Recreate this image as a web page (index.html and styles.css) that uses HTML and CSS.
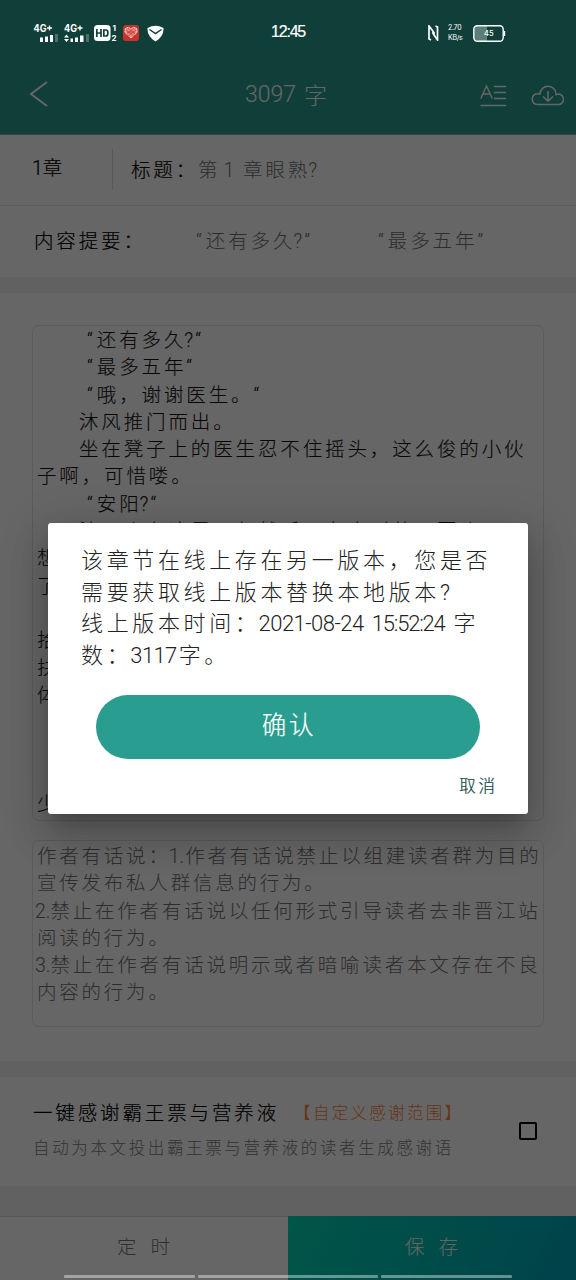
FILE: index.html
```html
<!DOCTYPE html>
<html lang="zh-CN">
<head>
<meta charset="utf-8">
<title>章节编辑</title>
<link rel="stylesheet" href="styles.css">
</head>
<body>
<div class="app">
  <header class="header">
    <div class="status">
      <div class="status-left">
        <svg class="sig1" width="26" height="20" viewBox="0 0 26 20"><text class="g4" x="0.500" y="9" textLength="13" lengthAdjust="spacingAndGlyphs">4G</text><path d="M14 5h5M16.500 2.500v5" stroke="#fff" stroke-width="1.300"/><path d="M7 14.500h3V19H7zM12 13.500h3V19h-3zM17 12h3v7h-3z" fill="#fff"/><path d="M22 11h3v8h-3z" fill="#fff" opacity=".25"/></svg>
        <svg class="sig2" width="26" height="20" viewBox="0 0 26 20"><text class="g4" x="0" y="9" textLength="13" lengthAdjust="spacingAndGlyphs">4G</text><path d="M13.500 5h5M16 2.500v5" stroke="#fff" stroke-width="1.300"/><path d="M0 14.500 2.500 11.500 5 14.500zM0 16 2.500 19 5 16zM6.500 15.500h2.500V19H6.500zM11 14.500h3V19h-3zM16 12.500h3.500V19H16z" fill="#fff"/><path d="M22 11h3v8h-3z" fill="#fff" opacity=".25"/></svg>
        <svg class="hd" width="24" height="18" viewBox="0 0 24 18"><rect y="1" width="16.500" height="16" rx="3.500" fill="#fff"/><path d="M2.800 5v8M7 5v8M3 9h4M9.800 6h2q2 0 2 2v2q0 2-2 2h-2z" fill="none" stroke="#103f39" stroke-width="1.700"/><text class="tiny" x="18.500" y="7">1</text><text class="tiny" x="17.500" y="17">2</text></svg>
        <svg class="red" width="16" height="16" viewBox="0 0 16 16"><rect width="16" height="16" rx="3" fill="#c7322d"/><path d="M8 13 2 7.500V4l2-1.500h2L8 4l2-1.500h2L14 4v3.500z" fill="#e88a84" stroke="#fff" stroke-width=".8" stroke-dasharray="2 .7"/><path d="m3 5 8 6M5 3l7 6M13 5l-8 6M11 3 4 9M4 7h8" stroke="#c7322d" stroke-width=".7"/></svg>
        <svg class="shield" width="17" height="17" viewBox="0 0 17 17"><path d="M.5 3Q8.500-1.500 16.500 3q.5 8-8 13.500Q0 11 .5 3z" fill="#fff"/><path d="m2.500 4.500 6 4 6-4" fill="none" stroke="#103f39" stroke-width="1.500"/></svg>
      </div>
      <div class="clock">12:45</div>
      <div class="status-right">
        <svg width="11" height="16" viewBox="0 0 11 16"><path d="M3 15 1 14V1l5 6.500V10M5 6v2.500L9.500 15V2L7.500 1" fill="none" stroke="#fff" stroke-width="1.700"/></svg>
        <div class="speed"><span>2.70</span><span>KB/s</span></div>
        <svg width="33" height="17" viewBox="0 0 33 17"><path d="M4 1h10v15H4q-3 0-3-3V4q0-3 3-3z" fill="#5a7f78"/><rect x=".8" y=".8" width="29.400" height="15.400" rx="3.500" fill="none" stroke="#fff" stroke-width="1.400"/><path d="M31.500 6v5" stroke="#fff" stroke-width="1.400"/><text class="batt" x="11" y="10.500">45</text></svg>
      </div>
    </div>
    <div class="toolbar">
      <svg class="back" width="20" height="28" viewBox="0 0 20 28"><path d="M18 2 2 14l16 12" fill="none" stroke="#fff" stroke-width="2"/></svg>
      <div class="title"><span class="words">3097</span><span>字</span></div>
      <svg class="font-icon" width="27" height="23" viewBox="0 0 27 23"><path d="M.8 14.500 6.500 2l5.700 12.500M3 10h7M14 2.500h12M14 8.500h12M14 14.500h12M.5 21.500H26" fill="none" stroke="#fff" stroke-width="1.400"/></svg>
      <svg class="cloud" width="34" height="21" viewBox="0 0 34 21"><path d="M7 19.500h20a5 5 0 0 0 .5-10.500q-1.500 0-2.500.5A8 8 0 0 0 9 9Q1.300 8 1.200 14 1.500 19.500 7 19.500zM17 6v10M12 11.500l5 4.700 5-4.700" fill="none" stroke="#fff" stroke-width="1.500"/></svg>
    </div>
  </header>

  <div class="row row-title">
    <div class="chapter"><span class="num">1</span>章</div>
    <div class="label">标题：</div>
    <div class="value">第<span class="one">1</span>章眼熟<span class="ask">?</span></div>
  </div>
  <div class="row row-summary">
    <div class="label">内容提要：</div>
    <div class="value s1"><span class="q">“</span>还有多久<span class="ask">?</span><span class="q">”</span></div>
    <div class="value s2"><span class="q">“</span>最多五年<span class="q">”</span></div>
  </div>

  <main class="editor">
    <div class="box content">
      <p class="quote"><span class="q">“</span>还有多久<span class="ask">?</span><span class="q">“</span></p>
      <p class="quote"><span class="q">“</span>最多五年<span class="q">“</span></p>
      <p class="quote"><span class="q">“</span>哦，谢谢医生。<span class="q">“</span></p>
      <p class="indent">沐风推门而出。</p>
      <p class="indent">坐在凳子上的医生忍不住摇头，这么俊的小伙</p>
      <p>子啊，可惜喽。</p>
      <p class="quote"><span class="q">“</span>安阳<span class="ask">?</span><span class="q">“</span></p>
      <p class="indent">沐风走在这里，忽然听见有人叫他，回头</p>
      <p>想</p>
      <p>了</p>
      <p></p>
      <p>拾</p>
      <p>扶</p>
      <p>体</p>
      <p></p>
      <p></p>
      <p></p>
      <p>少</p>
    </div>
    <div class="box notes">
      <p>作者有话说：<span class="n first">1.</span>作者有话说禁止以组建读者群为目的</p>
      <p>宣传发布私人群信息的行为。</p>
      <p class="numbered"><span class="n">2.</span>禁止在作者有话说以任何形式引导读者去非晋江站</p>
      <p>阅读的行为。</p>
      <p class="numbered"><span class="n">3.</span>禁止在作者有话说明示或者暗喻读者本文存在不良</p>
      <p>内容的行为。</p>
    </div>
  </main>

  <section class="thanks">
    <div>
      <div class="thanks-head"><span class="thanks-title">一键感谢霸王票与营养液</span><span class="thanks-link">【自定义感谢范围】</span></div>
      <div class="thanks-sub">自动为本文投出霸王票与营养液的读者生成感谢语</div>
    </div>
    <span class="checkbox"></span>
  </section>

  <footer class="actions">
    <div class="timer">定时</div>
    <div class="save">保存</div>
  </footer>

  <div class="scrim">
    <div class="dialog">
      <div class="message">
        <p>该章节在线上存在另一版本，您是否</p>
        <p>需要获取线上版本替换本地版本<span class="num">?</span></p>
        <p>线上版本时间：<span class="date">2021-08-24</span><span class="time">15:52:24</span>字</p>
        <p>数：<span class="count">3117</span>字。</p>
      </div>
      <div class="confirm">确认</div>
      <div class="cancel">取消</div>
    </div>
  </div>
  <div class="gesture"><i></i><i></i><i></i></div>
</div>
</body>
</html>
```
FILE: styles.css
```css
* { box-sizing: border-box; }
body { margin: 0; }
p { margin: 0; }
svg { display: block; flex: none; }
.app {
  position: relative;
  display: flex;
  flex-direction: column;
  width: 576px;
  height: 1280px;
  overflow: hidden;
  background: #f2f2f2;
  color: #000;
  font-family: Roboto, "Noto Sans CJK SC", sans-serif;
  font-weight: 300;
  font-size: 19.5px;
  letter-spacing: 2.87px;
  white-space: nowrap;
}
.num { letter-spacing: 0; }

.header { height: 135px; background: #289e8f; border-bottom: 1px solid #8ca8a6; }
.status {
  position: relative;
  z-index: 2;
  display: grid;
  grid-template-columns: 271px 157px 1fr;
  align-items: center;
  height: 66px;
  color: #fff;
}
.status-left { display: flex; align-items: center; padding-left: 33px; }
.sig2 { margin-left: 5px; }
.hd { margin-left: 4px; }
.red { margin-left: 5px; }
.shield { margin-left: 8px; }
.g4 { font: 700 10px Inter, sans-serif; fill: #fff; letter-spacing: 0; }
.tiny { font: 700 8px Inter, sans-serif; fill: #fff; letter-spacing: 0; }
.batt { font: 500 7.5px Inter, sans-serif; fill: #fff; letter-spacing: 0; }
.clock {
  padding-bottom: 2px;
  font: 400 16px "Liberation Sans", sans-serif;
  letter-spacing: -1.2px;
  -webkit-text-stroke: .2px #fff;
}
.status-right { display: flex; align-items: center; }
.speed {
  display: flex;
  flex-direction: column;
  width: 15px;
  margin: 0 10px 0 9px;
  font: 400 7px/10px Inter, sans-serif;
  letter-spacing: -.3px;
}
.toolbar { display: flex; align-items: center; height: 56px; padding-left: 29px; color: #fff; }
.title { display: flex; gap: 8px; width: 234px; margin-left: 196px; font-size: 23px; letter-spacing: 0; }
.words { padding-top: 4px; }
.cloud { margin: 3px 0 0 25px; }
.font-icon { margin: 2px -1px 0 1px; }

.row { display: flex; align-items: center; background: #fff; }
.row-title { height: 71px; border-bottom: 1px solid #ececec; padding-bottom: 4px; }
.chapter { width: 113px; height: 41px; margin-top: 2px; padding-left: 32px; line-height: 39px; border-right: 1px solid #ddd; -webkit-text-stroke: .2px #000; }
.label { -webkit-text-stroke: .2px #000; }
.row-title .label { width: 67px; margin-left: 18px; }
.value { color: #707070; }
.one { margin: 0 6px 0 3px; }
.row-summary { height: 71px; padding: 0 0 5px 34px; }
.row-summary .label { width: 162px; }
.s1 { width: 182px; }
.q { letter-spacing: 4px; }
.ask { margin-left: -2px; letter-spacing: 2px; }

.editor { height: 768px; margin-top: 16px; padding: 32px 32px 0; background: #fff; }
.box { width: 512px; padding: 1px 0 0 4px; border: 1px solid #e4e4e4; border-radius: 7px; }
.box p { height: 27.3px; line-height: 27.3px; }
.content { height: 496px; color: #111; -webkit-text-stroke: .1px #111; }
.indent { padding-left: 42px; }
.quote { padding-left: 50px; }
.notes { height: 187px; margin-top: 19px; padding-top: 2px; color: #707070; letter-spacing: 2.78px; }
.n { letter-spacing: 0; }
.first { margin: 0 1px 0 -2px; }
.numbered { margin-left: -2px; }

.thanks { display: flex; height: 109px; margin-top: 16px; padding: 20px 39px 0 33px; background: #fff; justify-content: space-between; }
.thanks-head { display: flex; align-items: center; height: 28px; }
.thanks-title { -webkit-text-stroke: .2px #000; }
.thanks-link { margin: 2px 0 0 15px; font-size: 16.5px; letter-spacing: 2.3px; color: #ff8240; }
.thanks-sub { height: 26px; margin-top: 11px; font-size: 16.5px; letter-spacing: 2.63px; line-height: 26px; color: #808080; }
.checkbox { width: 18px; height: 18px; margin-top: 25px; border: 2px solid #000; border-radius: 2px; }

.actions { display: grid; grid-template-columns: 1fr 1fr; height: 64px; margin-top: 30px; line-height: 62px; text-align: center; letter-spacing: 14px; }
.timer { background: #fff; border-top: 1px solid #ddd; color: #777; padding-left: 13px; }
.save { padding-left: 13px; line-height: 63px; color: #fff; background: linear-gradient(115deg, #00d7b4, #00a6bb); }

.scrim {
  position: absolute;
  inset: 0;
  z-index: 1;
  padding: 523px 48px 0;
  background: rgba(0, 0, 0, .6);
}
.dialog {
  height: 291px;
  padding: 22px 32px 0;
  border-radius: 3px;
  background: #fff;
  box-shadow: 0 11px 15px -7px rgba(0,0,0,.2), 0 24px 38px 3px rgba(0,0,0,.14), 0 9px 46px 8px rgba(0,0,0,.12);
}
.message { height: 150px; padding-left: 1px; font-size: 22px; letter-spacing: 3.64px; line-height: 31.6px; color: #222; }
.message p { height: 31.6px; }
.date { margin: 0 8px 0 -2px; letter-spacing: -.5px; }
.time { margin-right: 9px; letter-spacing: -1.2px; }
.count { margin: 0 2px 0 -2px; letter-spacing: -.6px; }
.confirm {
  width: 384px;
  height: 64px;
  margin-left: 16px;
  padding-left: 2px;
  border-radius: 32px;
  background: #299d90;
  color: #fff;
  font-size: 24.500px;
  line-height: 61px;
  text-align: center;
  -webkit-text-stroke: .2px #fff;
}
.cancel { margin: 15px -2px 0 0; font-size: 16.500px; line-height: 26px; text-align: right; color: #10453e; -webkit-text-stroke: .2px #10453e; }

.gesture {
  position: absolute;
  z-index: 3;
  left: 64px;
  bottom: 2px;
  display: grid;
  grid-template-columns: 131px 180px 131px;
  gap: 3px;
}
.gesture i { height: 3px; border-radius: 1px; background: rgba(255, 255, 255, .4); }
```
